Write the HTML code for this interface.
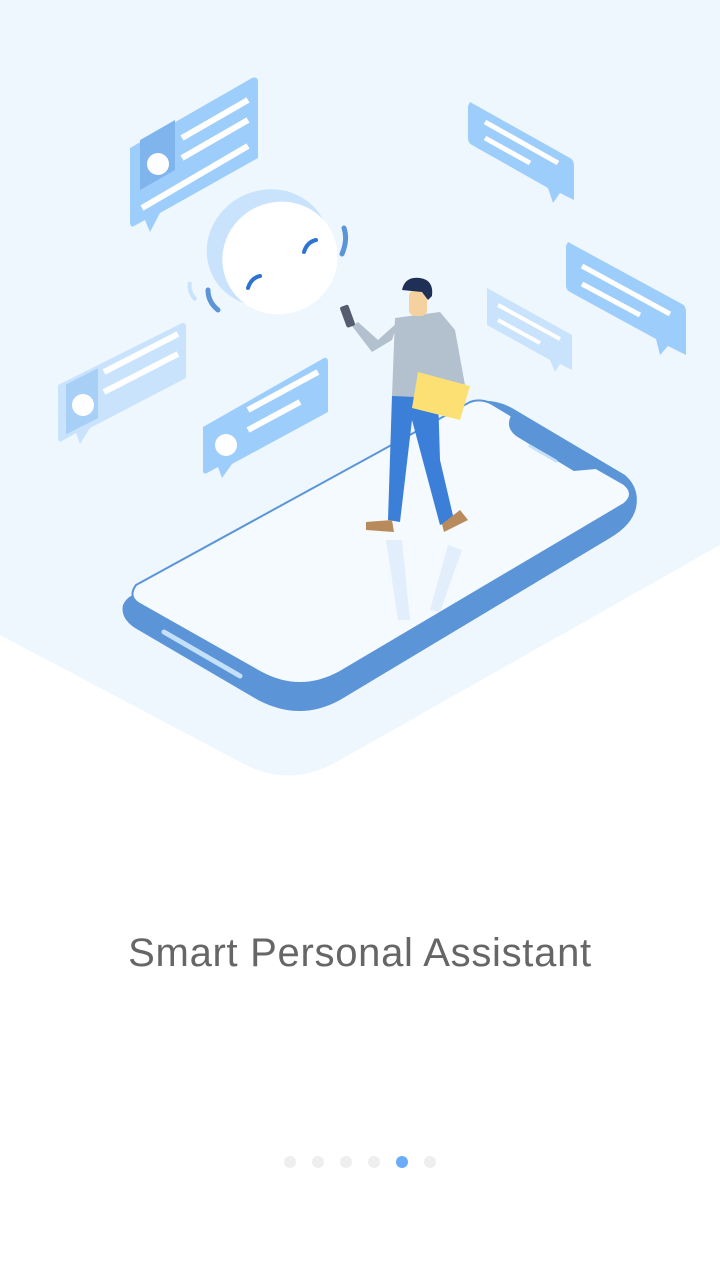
<!DOCTYPE html>
<html><head><meta charset="utf-8"><style>
html,body{margin:0;padding:0;background:#fff;width:720px;height:1280px;overflow:hidden}
.t{position:absolute;top:931px;left:0;width:720px;text-align:center;font-family:"Liberation Sans",sans-serif;font-size:40px;color:#666;letter-spacing:0.7px}
.dots{position:absolute;top:1156px;left:284px}
.dots span{position:absolute;width:12px;height:12px;border-radius:50%;background:#eeeeee}
</style></head><body>
<svg width="720" height="1280" style="position:absolute;left:0;top:0">
<path d="M0 0H720V545L340 760Q290 790 240 762L0 635Z" fill="#eff7fe"/>
<path d="M133 595L465 404Q490 396 512 408L625 475Q640 488 636 508Q632 525 610 538L340 700Q300 722 258 700L135 628Q120 618 123 605Q126 598 133 595Z" fill="#5b95d8"/>
<path d="M136 585L470 402Q481 398 492 404L512 416Q506 428 518 436L574 470L596 468L624 484Q636 494 624 504L340 672Q300 694 260 672L138 603Q128 596 136 585Z" fill="#f5faff" stroke="#5b95d8" stroke-width="2"/>
<path d="M164 632L240 676" stroke="#c5e0fb" stroke-width="5" stroke-linecap="round"/>
<path d="M530 446L556 461" stroke="#c5e0fb" stroke-width="3" stroke-linecap="round"/>
<path d="M130 148L252 78Q258 76 258 82V158L160 213L150 232L145 220L134 226Q130 228 130 222Z" fill="#9dcdfb"/>
<rect x="140" y="140" width="35" height="50" fill="#7fb5ec" transform="skewY(-30) translate(0,81)"/>
<circle cx="158" cy="164" r="11" fill="#fff"/>
<path d="M182 138L248 100M182 158L248 120M142 208L248 146" stroke="#fff" stroke-width="6"/>
<path d="M470 102L570 158Q574 160 574 166V200L560 193L553 203L548 188L472 145Q468 143 468 138V106Z" fill="#9dcdfb"/>
<path d="M485 122L558 163M485 138L530 163" stroke="#fff" stroke-width="5"/>
<path d="M568 242L682 304Q686 306 686 312V355L668 346L660 355L656 339L570 292Q566 290 566 285V246Z" fill="#9dcdfb"/>
<path d="M582 266L670 314M582 284L640 315" stroke="#fff" stroke-width="5"/>
<path d="M487 288L572 335V370L560 364L555 372L550 360L487 325Z" fill="#c9e3fd"/>
<path d="M498 305L560 339M498 320L540 343" stroke="#fff" stroke-width="4"/>
<path d="M58 385L182 323Q186 322 186 327V378L90 428L80 444L76 433L62 441Q58 443 58 438Z" fill="#c9e3fd"/>
<rect x="66" y="378" width="32" height="50" fill="#a8d0f7" transform="skewY(-27) translate(0,40)"/>
<circle cx="83" cy="405" r="11" fill="#fff"/>
<path d="M104 372L178 334M104 392L178 354" stroke="#fff" stroke-width="6"/>
<path d="M203 427L324 358Q328 357 328 362V412L232 464L222 478L218 467L207 473Q203 475 203 470Z" fill="#9dcdfb"/>
<circle cx="226" cy="445" r="11" fill="#fff"/>
<path d="M248 410L318 372M248 430L300 402" stroke="#fff" stroke-width="6"/>
<ellipse cx="268" cy="248" rx="62" ry="58" fill="#c9e3fd" transform="rotate(-25 268 248)"/>
<ellipse cx="280" cy="258" rx="58" ry="56" fill="#fff" transform="rotate(-25 280 258)"/>
<path d="M248 288q3-10 12-12M304 252q3-10 12-12" stroke="#2d73cf" stroke-width="4" fill="none" stroke-linecap="round"/>
<path d="M344 228q4 12-2 26" stroke="#5b95d8" stroke-width="5" fill="none" stroke-linecap="round"/>
<path d="M208 290q0 12 10 20" stroke="#5b95d8" stroke-width="5" fill="none" stroke-linecap="round"/>
<path d="M190 282q-2 10 6 18" stroke="#c9e3fd" stroke-width="4" fill="none"/>
<path d="M386 540L398 620L410 620L402 540Z" fill="#e2eefc"/>
<path d="M448 545L430 610L440 612L462 550Z" fill="#e2eefc"/>
<path d="M392 395L388 520L400 522L412 420L440 525L454 520L440 460L438 395Z" fill="#3b7fd9"/>
<path d="M366 522L392 520L394 532L366 530Z" fill="#b88a5c"/>
<path d="M442 524L460 510L468 520L444 532Z" fill="#b88a5c"/>
<path d="M395 318L440 312L455 330L465 385L455 395L440 392L438 398L392 396Z" fill="#b3c0ce"/>
<path d="M398 322L378 340L358 322L352 326L372 352L392 340Z" fill="#b3c0ce"/>
<rect x="343" y="305" width="9" height="22" rx="2" fill="#555d70" transform="rotate(-20 348 316)"/>
<path d="M418 372L470 386L460 420L412 408Z" fill="#fde074"/>
<rect x="409" y="290" width="18" height="26" rx="6" fill="#f6d1a0"/>
<path d="M402 290Q405 276 420 278Q434 280 432 296L428 300L422 292Z" fill="#1f2f55"/>
</svg>
<div class="t">Smart Personal Assistant</div>
<div class="dots">
<span style="left:0"></span><span style="left:28px"></span><span style="left:56px"></span><span style="left:84px"></span><span style="left:112px;background:#6aacf8"></span><span style="left:140px"></span>
</div>
</body></html>
